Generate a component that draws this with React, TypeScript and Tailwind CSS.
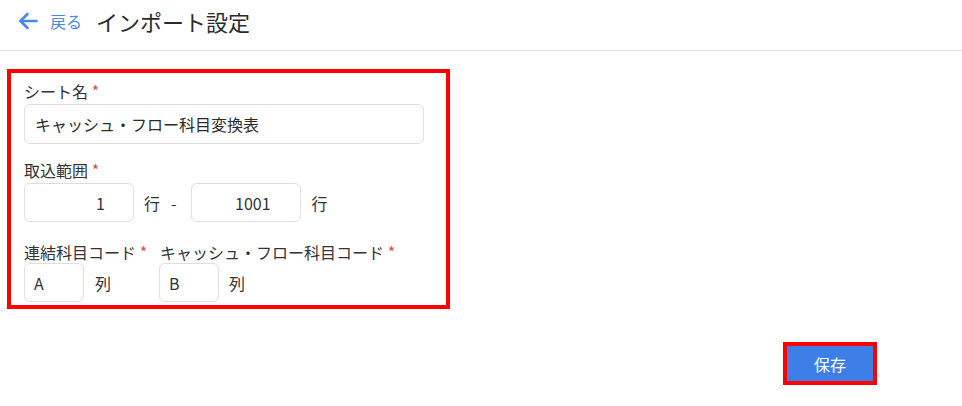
import React from "react";

const font = { fontFamily: '"Noto Sans CJK JP", "Noto Sans", sans-serif' };

function Star() {
  return <span className="ml-[4px] text-[15px] leading-[20px] text-[#e5403a]">*</span>;
}

export default function App() {
  return (
    <div className="w-[962px] h-[406px] bg-white text-[#333]" style={font}>
      <header className="h-[51px] border-b border-[#e3e3e3] flex items-center pl-[18px]">
        <svg width="20" height="18" viewBox="0 0 20 18" className="mt-[-9px]" fill="none" stroke="#4a88ee" strokeWidth="2.6" strokeLinecap="round" strokeLinejoin="round">
          <path d="M18.5 9H2.5" />
          <path d="M9.5 2L2.5 9l7 7" />
        </svg>
        <span className="ml-[12px] text-[16px] text-[#4a88ee] mt-[-9px]">戻る</span>
        <span className="ml-[14px] text-[22px] text-[#2b2b2b] mt-[-8px]">インポート設定</span>
      </header>

      <div className="pl-[7px] pt-[18px]">
        <div className="w-[443px] h-[240px] border-4 border-[#ff0000] pl-[13px] pt-[8px]">
          <div className="text-[16px] leading-[20px] flex items-start">
            シート名<Star />
          </div>
          <div className="mt-[3px] w-[400px] h-[40px] border border-[#dedede] rounded-[6px] flex items-center pl-[10px] text-[16px] text-[#2b2b2b]">
            キャッシュ・フロー科目変換表
          </div>

          <div className="mt-[16px] text-[16px] leading-[20px] flex items-start">
            取込範囲<Star />
          </div>
          <div className="mt-[3px] flex items-center text-[16px]">
            <div className="w-[110px] h-[39px] border border-[#dedede] rounded-[6px] flex items-center justify-end pr-[28px]">1</div>
            <span className="ml-[10px]">行</span>
            <span className="ml-[11px]">-</span>
            <div className="ml-[14px] w-[110px] h-[39px] border border-[#dedede] rounded-[6px] flex items-center justify-end pr-[29px]">1001</div>
            <span className="ml-[11px]">行</span>
          </div>

          <div className="mt-[20px] flex text-[16px]">
            <div className="w-[135px]">
              <div className="leading-[20px] flex items-start">
                連結科目コード<Star />
              </div>
              <div className="mt-[1px] flex items-center">
                <div className="w-[60px] h-[39px] border border-[#dedede] rounded-[6px] flex items-center pl-[9px]">A</div>
                <span className="ml-[11px]">列</span>
              </div>
            </div>
            <div>
              <div className="leading-[20px] flex items-start pl-[1px]">
                キャッシュ・フロー科目コード<Star />
              </div>
              <div className="mt-[1px] flex items-center">
                <div className="w-[60px] h-[39px] border border-[#dedede] rounded-[6px] flex items-center pl-[9px]">B</div>
                <span className="ml-[10px]">列</span>
              </div>
            </div>
          </div>
        </div>
      </div>

      <div className="flex justify-end pr-[85px] mt-[33px]">
        <button className="w-[94px] h-[43px] border-4 border-[#ff0000] bg-[#3d7fe6] text-white text-[16px] flex items-center justify-center">
          保存
        </button>
      </div>
    </div>
  );
}
